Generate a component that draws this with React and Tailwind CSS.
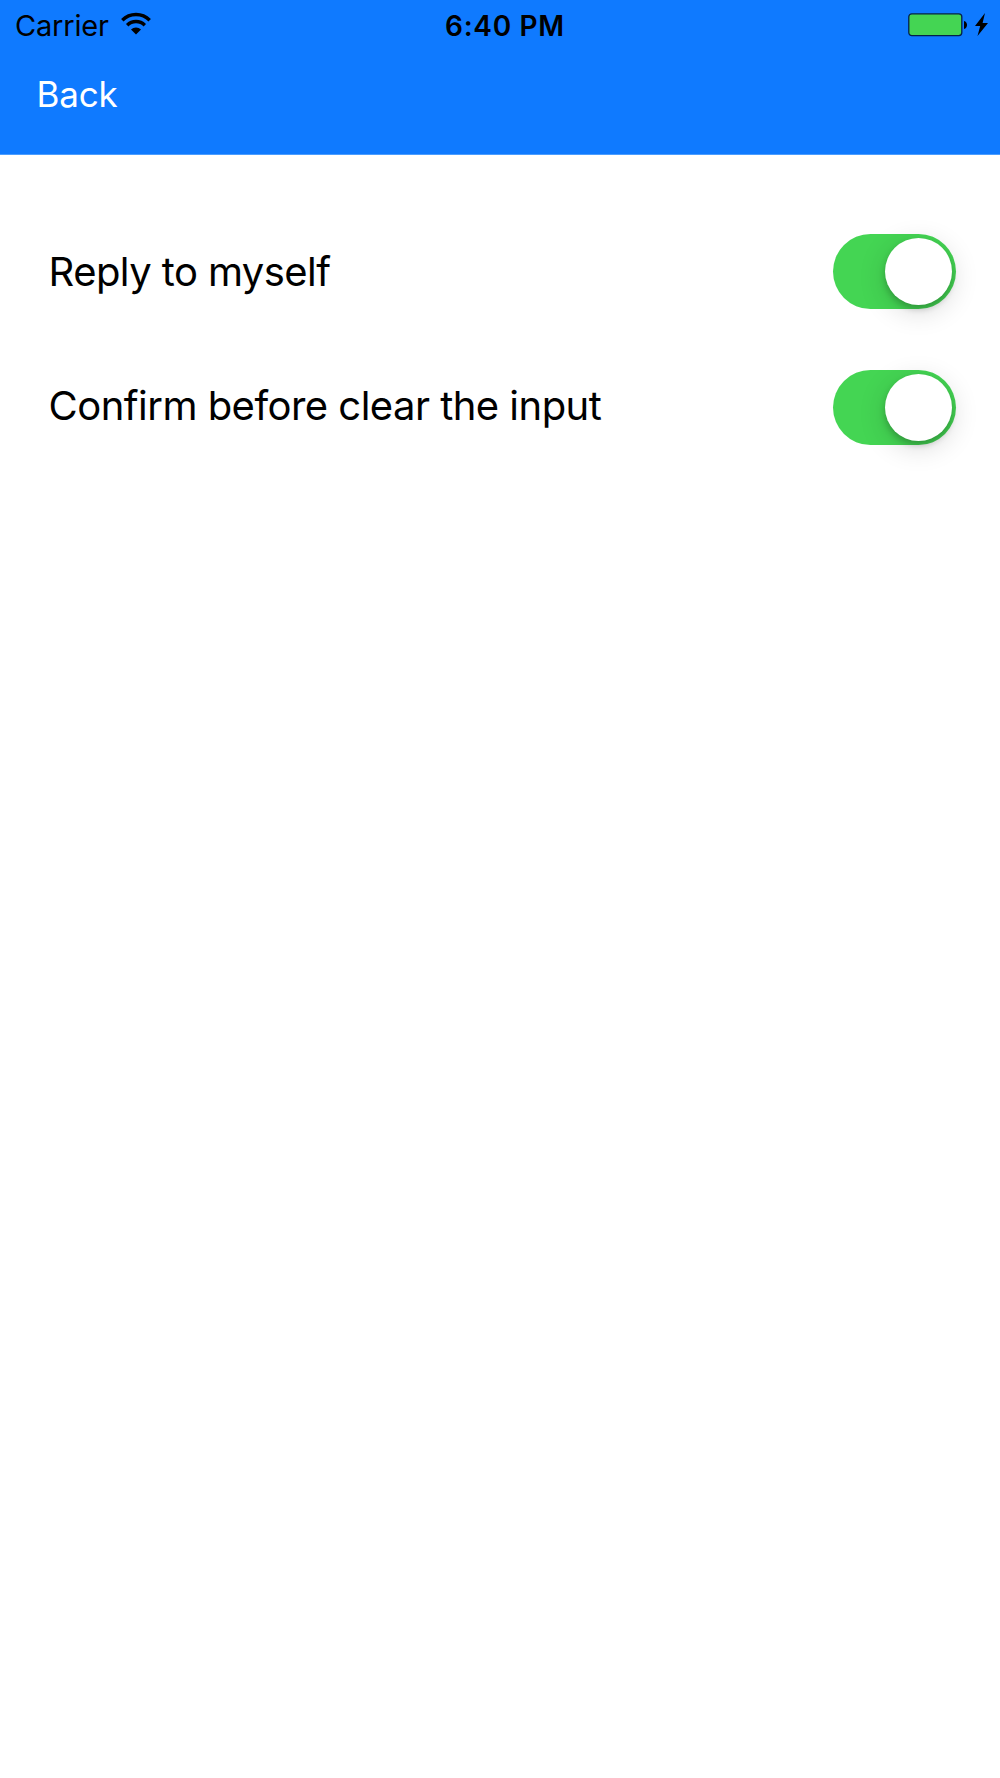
import React, { useState } from "react";

const SETTINGS = [
  { id: "reply", label: "Reply to myself", spacing: "tracking-[-0.57px]" },
  { id: "confirm", label: "Confirm before clear the input", spacing: "mb-[2px] tracking-[-0.53px]" },
];

export default function App() {
  const [values, setValues] = useState({ reply: true, confirm: true });

  const toggle = (id) => setValues((prev) => ({ ...prev, [id]: !prev[id] }));

  return (
    <div className="min-h-[1778px] w-full bg-white font-['Inter',sans-serif] text-black">
      <header className="h-[155px] border-b border-[#4b9dff] bg-[#0f7aff]">
        <StatusBar />

        <button
          type="button"
          className="ml-[36.6px] mt-[19px] block text-[35px] font-normal leading-[50px] tracking-[-0.2px] text-white"
        >
          Back
        </button>
      </header>

      <main className="flex flex-col gap-[60.4px] pl-[48.6px] pr-[43.6px] pt-[79.2px]">
        {SETTINGS.map((item) => (
          <div key={item.id} className="flex h-[75px] items-center justify-between">
            <span className={`text-[40px] leading-[48px] ${item.spacing}`}>
              {item.label}
            </span>

            <Switch
              label={item.label}
              checked={values[item.id]}
              onChange={() => toggle(item.id)}
            />
          </div>
        ))}
      </main>
    </div>
  );
}

const StatusBar = () => (
  <div className="grid h-[50px] grid-cols-3 items-center pl-[15px] pr-[12px]">
    <div className="flex items-center">
      <span className="mt-[1px] w-[105px] text-[29px] leading-[36px] tracking-[-0.2px]">
        Carrier
      </span>
      <WifiIcon />
    </div>

    <span className="mt-[1px] whitespace-nowrap pl-[7px] text-center text-[28px] font-semibold leading-[36px] tracking-[0.7px]">
      6:40 PM
    </span>

    <div className="flex items-center justify-end">
      <BatteryIcon />
    </div>
  </div>
);

const Switch = ({ label, checked, onChange }) => (
  <button
    type="button"
    role="switch"
    aria-checked={checked}
    aria-label={label}
    onClick={onChange}
    className={`flex h-[75px] w-[123.4px] items-center rounded-full px-[4px] ${
      checked ? "justify-end bg-[#44d553]" : "justify-start bg-[#e5e5e5]"
    }`}
  >
    <span className="h-[67px] w-[67px] rounded-full bg-white shadow-[0_4px_6px_rgba(0,0,0,0.2),0_6px_28px_rgba(0,0,0,0.16)]" />
  </button>
);

const WifiIcon = () => (
  <svg width="32" height="24" viewBox="0 0 32 24" fill="none" stroke="#000" strokeWidth="3.4" className="mb-[2px]">
    <path d="M2.3 8.2a19.2 19.2 0 0 1 27.4 0" />
    <path d="M7.2 13.2a12.4 12.4 0 0 1 17.6 0" />
    <path d="M16 22.5l-5-5a7.1 7.1 0 0 1 10 0z" fill="#000" stroke="none" />
  </svg>
);

const BatteryIcon = () => (
  <svg width="80" height="26" viewBox="0 0 80 26">
    <rect x="0.8" y="1.8" width="53" height="21.8" rx="3" fill="#44d553" stroke="#04204a" strokeWidth="1.3" />
    <path d="M56 9c4 1 4 7 0 8z" fill="#000" />
    <path d="M77 1L67 14h5.2L69.5 24 80 11h-5.4z" fill="#000" />
  </svg>
);
